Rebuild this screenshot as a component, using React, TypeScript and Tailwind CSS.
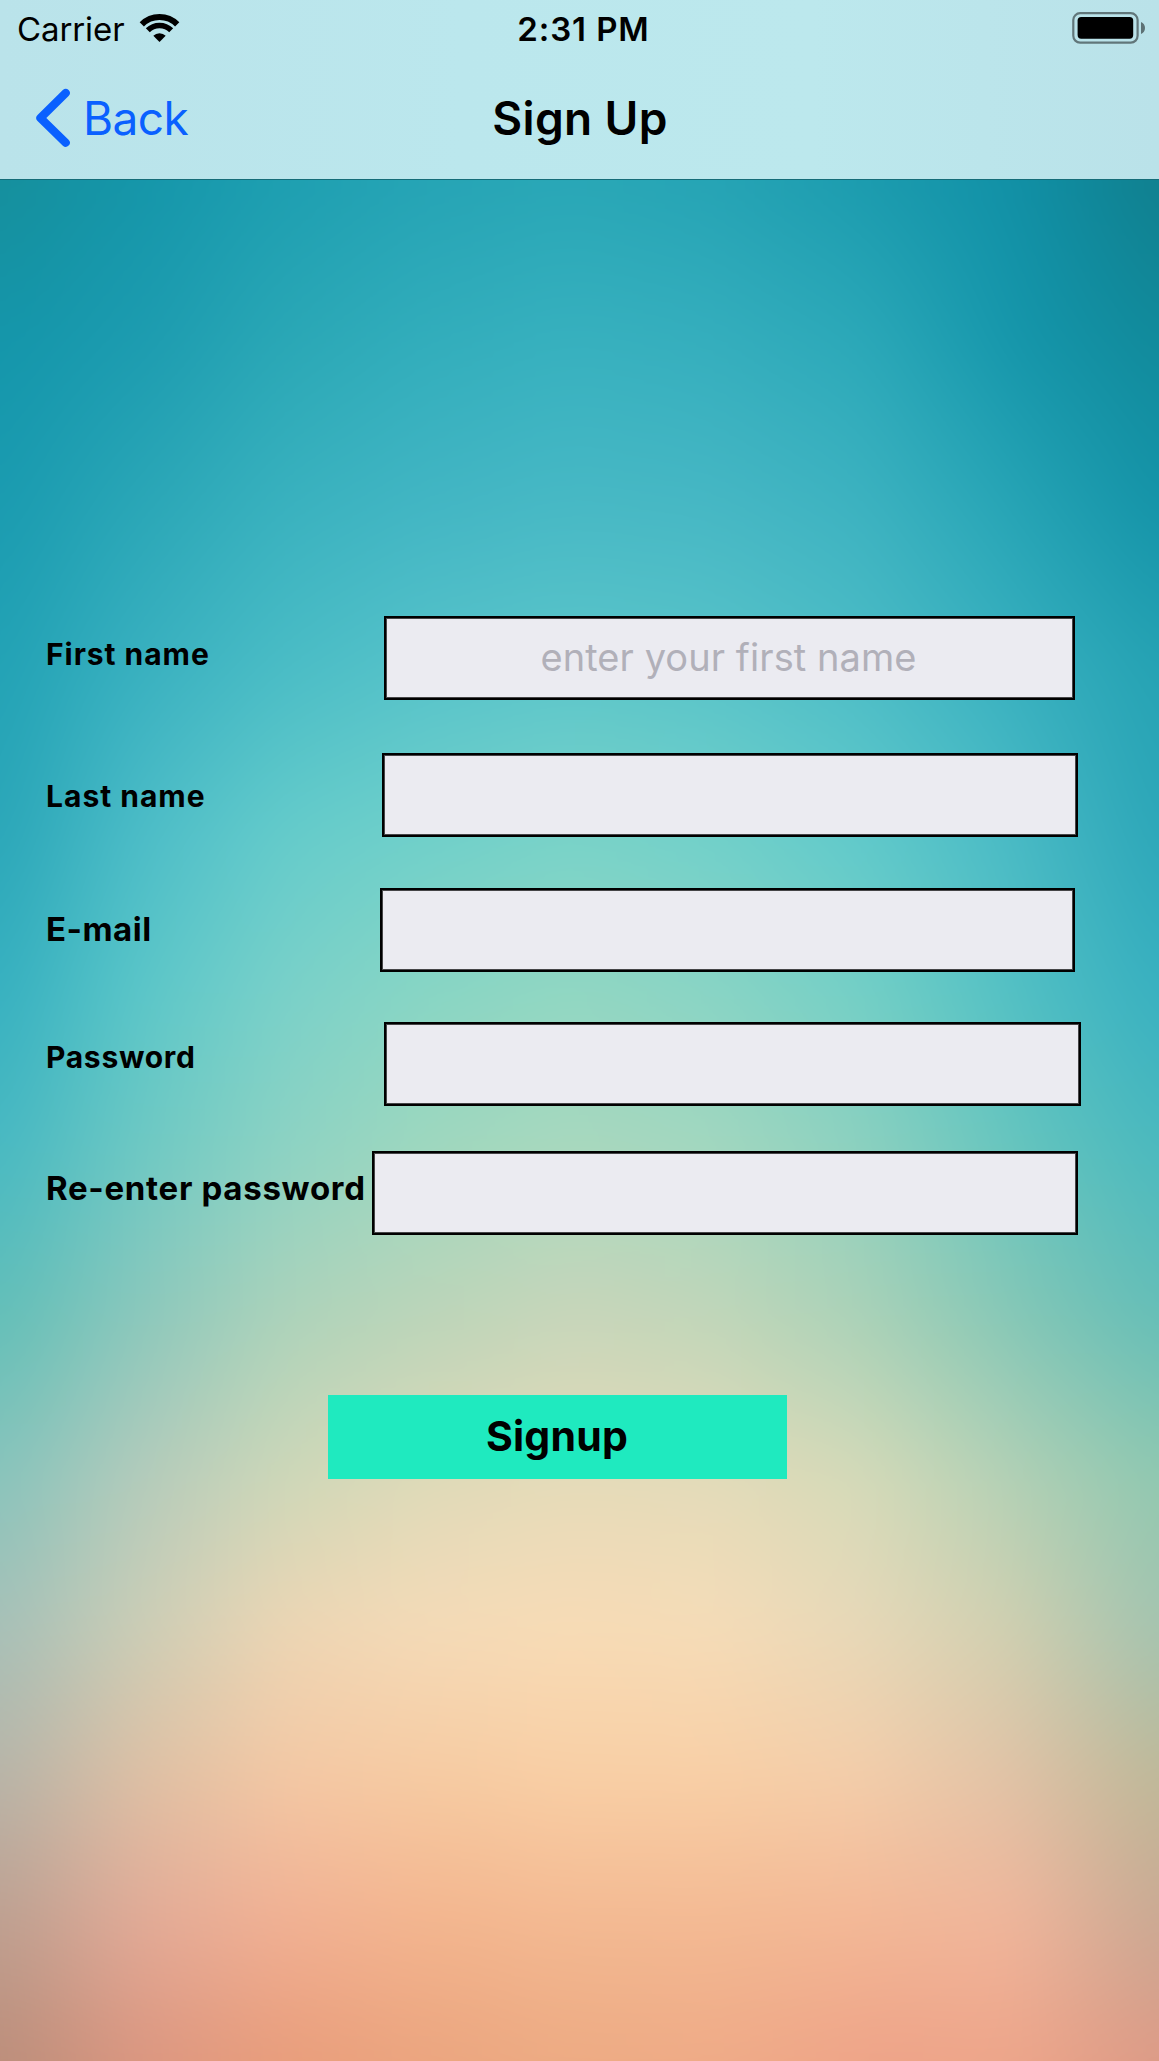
import React from "react";

type FieldProps = {
  id: string;
  label: string;
  type?: string;
  placeholder?: string;
  row: string;
  labelClass: string;
  box: string;
};

/* Vertical colour ramps; each one fades in from the previous column, and the blur softens the seams. */
function Wallpaper() {
  return (
    <div className="absolute -inset-x-20 top-0 -bottom-20 -z-10 blur-[30px]" aria-hidden="true">
      <div className="absolute inset-0 bg-[linear-gradient(#158f9c_180px,#1496ab_343px,#1a9bb0_505px,#22a2b5_668px,#2aa6b8_830px,#36b0c0_993px,#48b9c2_1155px,#62bfb8_1318px,#88c4bc_1480px,#a6c0b8_1628px,#b7b4a8_1777px,#bd9f90_1925px,#bb8d7a_2061px)]" />
      <div className="absolute inset-0 [mask-image:linear-gradient(to_right,transparent_80px,black_225px)] bg-[linear-gradient(#1596aa_180px,#1d9cb0_343px,#2ba7b7_505px,#3ab1c0_668px,#4dbdc8_830px,#5cc7c9_993px,#70c9c3_1155px,#8dc8bc_1318px,#b6cbbb_1480px,#cdceb6_1628px,#dfc0a4_1777px,#e3aa97_1925px,#dc9680_2061px)]" />
      <div className="absolute inset-0 [mask-image:linear-gradient(to_right,transparent_225px,black_370px)] bg-[linear-gradient(#1e9fb1_180px,#2ba8b6_343px,#3ab2bf_505px,#4bbdc6_668px,#65cccb_830px,#7bd1c9_993px,#8fd3c3_1155px,#aed3ba_1318px,#cfd8b8_1480px,#eed6b4_1628px,#f4c8a4_1777px,#f1b093_1925px,#e99d7b_2061px)]" />
      <div className="absolute inset-0 [mask-image:linear-gradient(to_right,transparent_370px,black_515px)] bg-[linear-gradient(#26a4b5_180px,#33aebc_343px,#43b6c4_505px,#57c3ca_668px,#70d0ca_830px,#89d6c4_993px,#a0d8be_1155px,#bdd5b9_1318px,#e0dab8_1480px,#f5dbb8_1628px,#f6cba2_1777px,#f3b58e_1925px,#eba57f_2061px)]" />
      <div className="absolute inset-0 [mask-image:linear-gradient(to_right,transparent_515px,black_660px)] bg-[linear-gradient(#29a7b6_180px,#38b1bf_343px,#48b9c5_505px,#5cc6ca_668px,#79d3c9_830px,#92d7c2_993px,#aad8be_1155px,#c9d6ba_1318px,#e6dbb9_1480px,#f8dcb6_1628px,#f9cfa5_1777px,#f3b992_1925px,#edab83_2061px)]" />
      <div className="absolute inset-0 [mask-image:linear-gradient(to_right,transparent_660px,black_805px)] bg-[linear-gradient(#25a3b4_180px,#35aebd_343px,#46b7c4_505px,#58c3c9_668px,#70d0ca_830px,#88d4c5_993px,#a2d7bf_1155px,#c0d6b9_1318px,#e3dbb9_1480px,#f5dcb8_1628px,#f8cfa6_1777px,#f3b993_1925px,#efaa87_2061px)]" />
      <div className="absolute inset-0 [mask-image:linear-gradient(to_right,transparent_805px,black_950px)] bg-[linear-gradient(#1b9bae_180px,#2ba8b8_343px,#3cb2c0_505px,#4cbcc6_668px,#5fc9cb_830px,#72cfc6_993px,#8bd0bf_1155px,#a9d1b7_1318px,#d4dab8_1480px,#e6d8b8_1628px,#f3cdaa_1777px,#f3b796_1925px,#eea388_2061px)]" />
      <div className="absolute inset-0 [mask-image:linear-gradient(to_right,transparent_950px,black_1095px)] bg-[linear-gradient(#1190a6_180px,#1596ab_343px,#26a4b5_505px,#38b0bf_668px,#49bac5_830px,#52c0c4_993px,#66c5be_1155px,#85c7b6_1318px,#b2d0b5_1480px,#cfcfb0_1628px,#e0c2a6_1777px,#f0b59b_1925px,#eda58a_2061px)]" />
      <div className="absolute inset-0 [mask-image:linear-gradient(to_right,transparent_1095px,black_1239px)] bg-[linear-gradient(#107f8e_180px,#118a9b_343px,#1493a8_505px,#25a2b3_668px,#2ca6b8_830px,#38b0c0_993px,#4bb9be_1155px,#65beb7_1318px,#90c8b0_1480px,#a3c3b0_1628px,#beb898_1777px,#c9a893_1925px,#dd9a86_2061px)]" />
    </div>
  );
}

function WifiIcon() {
  return (
    <svg className="mt-px ml-[14px] h-[30px] w-[42px]" viewBox="138 13 42 30" fill="none" stroke="black">
      <path d="M141.8 24.3 A25 25 0 0 1 177.2 24.3" strokeWidth="6" />
      <path d="M147.8 30.3 A16.6 16.6 0 0 1 171.2 30.3" strokeWidth="5.6" />
      <path d="M153.3 35.8 A8.8 8.8 0 0 1 165.7 35.8 L159.5 42 Z" fill="black" stroke="none" />
    </svg>
  );
}

function BatteryIcon() {
  return (
    <svg className="h-8 w-[73px]" viewBox="1072 12 73 32" fill="none">
      <rect x="1073.3" y="13.2" width="64.3" height="29.4" rx="6.8" stroke="black" strokeOpacity="0.48" strokeWidth="2.2" />
      <rect x="1077.6" y="17" width="55.6" height="21.7" rx="3.6" fill="black" />
      <path d="M1141 22 C1143.5 23 1145 25.2 1145 28 C1145 30.8 1143.5 33 1141 34 Z" fill="black" fillOpacity="0.5" />
    </svg>
  );
}

function Field({ id, label, type = "text", placeholder, row, labelClass, box }: FieldProps) {
  return (
    <div className={`flex h-[84px] items-start justify-between pl-[46px] ${row}`}>
      <label htmlFor={id} className={`whitespace-nowrap font-bold ${labelClass}`}>
        {label}
      </label>
      <input
        id={id}
        type={type}
        placeholder={placeholder}
        className={`h-[84px] rounded-none border-2 border-black bg-[#ebebf1] pr-[2px] pb-[3px] text-center text-[38px] tracking-[0.07px] shadow-[inset_0_0_0_1px_rgba(0,0,0,0.7)] outline-none placeholder:text-[#b1b0b9] placeholder:opacity-100 ${box}`}
      />
    </div>
  );
}

export default function App() {
  return (
    <main className="relative isolate h-[2061px] w-[1159px] overflow-hidden font-[Inter,sans-serif] text-black">
      <Wallpaper />
      <header className="h-[180px] border-b border-[#146c78] bg-[linear-gradient(to_right,#bae3ea,#bbe7ed_40%,#bce8ed_70%,#bae2e9)]">
        <div className="grid h-[58px] grid-cols-3 items-start pt-3">
          <div className="flex items-start pl-[17px]">
            <span className="pt-px text-[33px] leading-[33px] tracking-[-0.1px]">Carrier</span>
            <WifiIcon />
          </div>
          <span className="pt-px pl-2 text-center text-[33px] leading-[33px] font-semibold tracking-[0.9px]">2:31 PM</span>
          <div className="flex justify-end pr-[14px]">
            <BatteryIcon />
          </div>
        </div>
        <div className="grid grid-cols-3 items-start pt-[30px]">
          <div className="flex items-start pl-9 text-[#0a60ff]">
            <svg className="h-[60px] w-[35px]" viewBox="36 88 35 60" fill="none" stroke="currentColor" strokeWidth="8.2" strokeLinecap="round" strokeLinejoin="round">
              <path d="M65.7 93 L40.4 118 L65.7 142.7" />
            </svg>
            <span className="pt-[7px] pl-3 text-[46px] leading-[46px] tracking-[-0.57px]">Back</span>
          </div>
          <h1 className="pt-[7px] pl-px text-center text-[46px] leading-[46px] font-semibold tracking-[0.36px]">Sign Up</h1>
        </div>
      </header>

      <form className="flex flex-col pt-[436px]" onSubmit={(e) => e.preventDefault()}>
        <Field id="first" label="First name" placeholder="enter your first name" row="pr-[84px]" labelClass="pt-[23px] text-[30px] leading-[30px] tracking-[0.96px]" box="w-[691px]" />
        <Field id="last" label="Last name" row="mt-[53px] pr-[81px]" labelClass="pt-[28px] text-[30px] leading-[30px] tracking-[1px]" box="w-[696px]" />
        <Field id="email" type="email" label="E-mail" row="mt-[51px] pr-[84px]" labelClass="pt-[25px] text-[33px] leading-[33px] tracking-[0.5px]" box="w-[695px]" />
        <Field id="password" type="password" label="Password" row="mt-[50px] pr-[78px]" labelClass="pt-5 text-[30px] leading-[30px] tracking-[0.7px]" box="w-[697px]" />
        <Field id="confirm" type="password" label="Re-enter password" row="mt-[45px] pr-[81px]" labelClass="pt-[21px] text-[33px] leading-[33px] tracking-[0.7px]" box="w-[706px]" />
        <button type="submit" className="mt-[160px] ml-[328px] h-[84px] w-[459px] bg-[#1feabf] pr-px pb-px text-[41px] leading-[41px] font-bold tracking-[0.2px]">
          Signup
        </button>
      </form>
    </main>
  );
}
